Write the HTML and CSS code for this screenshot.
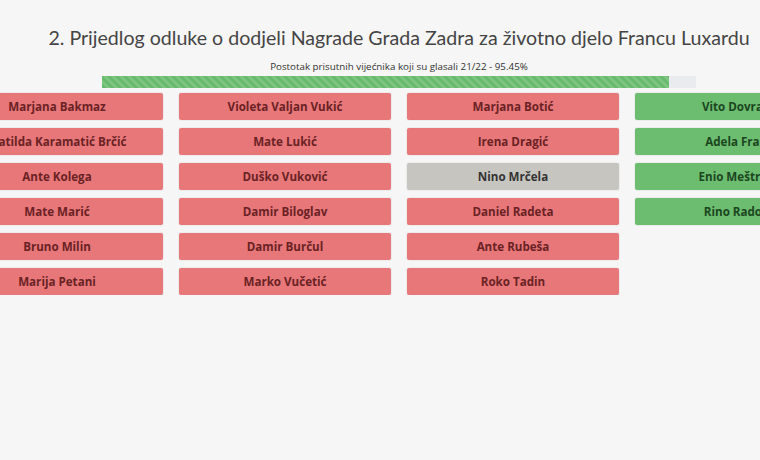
FILE: index.html
```html
<!DOCTYPE html>
<html lang="hr">
<head>
  <meta charset="UTF-8">
  <meta name="viewport" content="width=device-width, initial-scale=1.0">
  <title>Glasanje</title>
  <link rel="stylesheet" href="styles.css">
</head>
<body>
  <div class="page">
    <h2 class="naslov">2. Prijedlog odluke o dodjeli Nagrade Grada Zadra za životno djelo Francu Luxardu</h2>
    <div class="postotak">Postotak prisutnih vijećnika koji su glasali 21/22 - 95.45%</div>
    <div class="traka">
      <div class="traka-puna" style="width: 95.45%"></div>
    </div>

    <div class="glasovi">
      <div class="stupac">
        <div class="vijecnik protiv">Marjana Bakmaz</div>
        <div class="vijecnik protiv">Matilda Karamatić Brčić</div>
        <div class="vijecnik protiv">Ante Kolega</div>
        <div class="vijecnik protiv">Mate Marić</div>
        <div class="vijecnik protiv">Bruno Milin</div>
        <div class="vijecnik protiv">Marija Petani</div>
      </div>
      <div class="stupac">
        <div class="vijecnik protiv">Violeta Valjan Vukić</div>
        <div class="vijecnik protiv">Mate Lukić</div>
        <div class="vijecnik protiv">Duško Vuković</div>
        <div class="vijecnik protiv">Damir Biloglav</div>
        <div class="vijecnik protiv">Damir Burčul</div>
        <div class="vijecnik protiv">Marko Vučetić</div>
      </div>
      <div class="stupac">
        <div class="vijecnik protiv">Marjana Botić</div>
        <div class="vijecnik protiv">Irena Dragić</div>
        <div class="vijecnik suzdrzan">Nino Mrčela</div>
        <div class="vijecnik protiv">Daniel Radeta</div>
        <div class="vijecnik protiv">Ante Rubeša</div>
        <div class="vijecnik protiv">Roko Tadin</div>
      </div>
      <div class="stupac">
        <div class="vijecnik za">Vito Dovranić</div>
        <div class="vijecnik za">Adela Franić</div>
        <div class="vijecnik za">Enio Meštrović</div>
        <div class="vijecnik za">Rino Radović</div>
      </div>
    </div>
  </div>
</body>
</html>
```

FILE: styles.css
```css
body {
  margin: 0;
  background-color: #f6f6f6;
  font-family: "Open Sans", Arial, sans-serif;
  overflow: hidden;
}
.page {
  width: 798px;
  display: flex;
  flex-direction: column;
  align-items: center;
}
.naslov {
  margin: 24px 0 0;
  font-family: Lato, "Open Sans", sans-serif;
  font-size: 19.6px;
  font-weight: normal;
  color: #454545;
  white-space: nowrap;
  line-height: 28px;
}
.postotak {
  margin-top: 9px;
  font-size: 9.8px;
  color: #333;
  line-height: 12px;
  white-space: nowrap;
}
.traka {
  margin-top: 3px;
  width: 594px;
  height: 12px;
  background: #e9ebee;
}
.traka-puna {
  height: 100%;
  background-color: #68bb6c;
  background-image: linear-gradient(45deg, rgba(255,255,255,0.15) 25%, transparent 25%, transparent 50%, rgba(255,255,255,0.15) 50%, rgba(255,255,255,0.15) 75%, transparent 75%, transparent);
  background-size: 8px 8px;
}
.glasovi {
  margin-top: 5px;
  display: flex;
  gap: 16px;
  flex-shrink: 0;
}
.stupac {
  width: 212px;
  display: flex;
  flex-direction: column;
  gap: 8px;
}
.vijecnik {
  height: 27px;
  line-height: 27px;
  text-align: center;
  font-size: 11.6px;
  font-weight: bold;
  white-space: nowrap;
  border-radius: 2px;
  box-shadow: 0 0 0 1px rgba(0,0,0,0.04);
}
.protiv {
  background: #e8777a;
  color: #6a2224;
}
.za {
  background: #6cbd70;
  color: #1b461e;
}
.suzdrzan {
  background: #c6c5c0;
  color: #333;
}
```
